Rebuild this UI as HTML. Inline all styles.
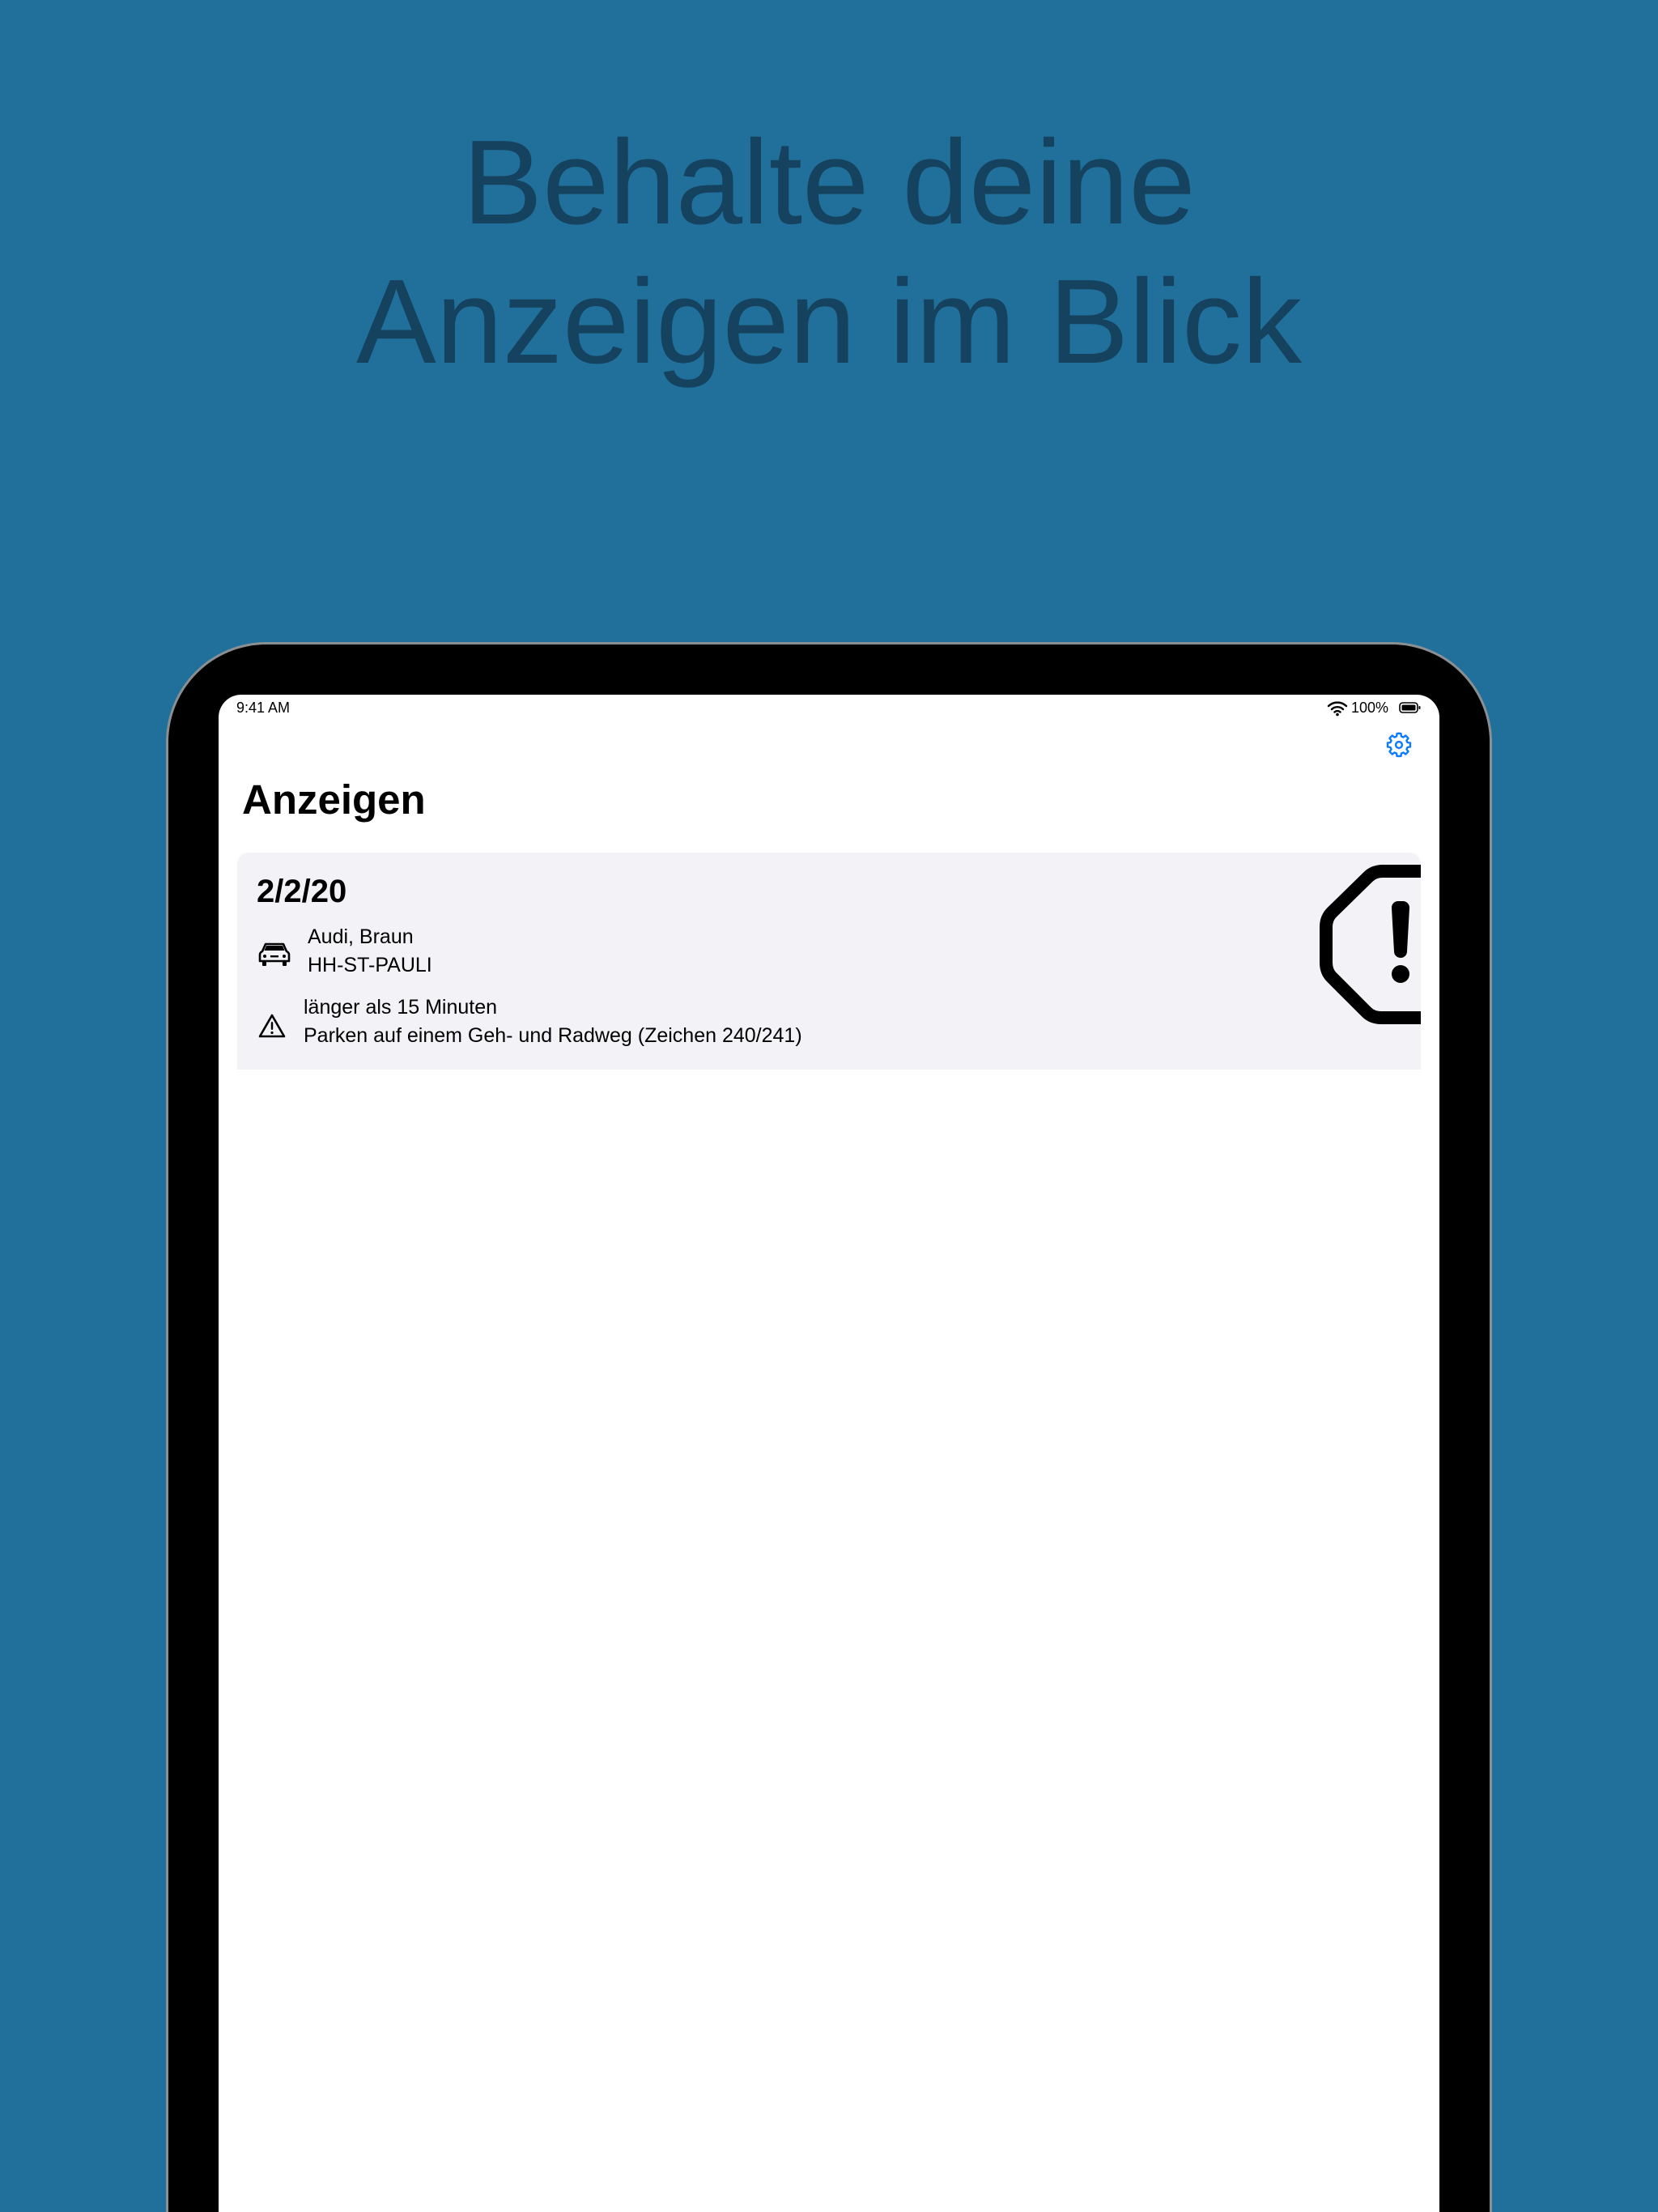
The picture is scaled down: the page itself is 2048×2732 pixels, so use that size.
<!DOCTYPE html>
<html style="overflow:hidden;width:2048px;height:2732px"><head><meta charset="utf-8"><style>
*{margin:0;padding:0;box-sizing:border-box}
body{width:2048px;height:2732px;background:#21709b;position:relative;overflow:hidden;font-family:"Liberation Sans",sans-serif}
.wrap{position:absolute;left:0;top:0;width:2048px;height:2732px;overflow:hidden}
.t{position:absolute;left:0;width:2048px;text-align:center;color:#15425e;font-size:148px;line-height:1;white-space:nowrap}
.dev{position:absolute;left:205px;top:793px;width:1638px;height:1939px;background:#000;border-radius:124px 124px 0 0;border:3px solid #8a8f94;border-bottom:none}
.scr{position:absolute;left:270px;top:858px;width:1508px;height:1874px;background:#fff;border-radius:28px 28px 0 0;overflow:hidden}
.a{position:absolute;white-space:nowrap;color:#000}
</style></head><body><div class="wrap">
<div class="t" style="top:152px">Behalte deine</div>
<div class="t" style="top:324px">Anzeigen im Blick</div>
<div class="dev"></div>
<div class="scr">
 <div class="a" style="left:22px;top:6px;font-size:18px">9:41 AM</div>
 <svg class="a" style="left:1369px;top:7px" width="26" height="20" viewBox="0 0 26 20"><path d="M2 7a16 16 0 0 1 22 0M6 11a10 10 0 0 1 14 0M9.5 14.5a5 5 0 0 1 7 0" fill="none" stroke="#000" stroke-width="2.4" stroke-linecap="round"/><circle cx="13" cy="17.5" r="1.8"/></svg>
 <div class="a" style="left:1399px;top:6px;font-size:18px">100%</div>
 <svg class="a" style="left:1458px;top:8px" width="28" height="16" viewBox="0 0 28 16"><rect x="1" y="2" width="22" height="12" rx="3.5" fill="none" stroke="#000" stroke-width="1.6"/><rect x="3.5" y="4.5" width="17" height="7" rx="1.5"/><rect x="24.5" y="6" width="2" height="4" rx="1"/></svg>
 <svg class="a" style="left:1440px;top:44px" width="36" height="36" viewBox="0 0 24 24"><path d="M12 2.5l1.6.2.4 2.3 1.6.7 1.9-1.4 2.2 2.2-1.4 1.9.7 1.6 2.3.4v3.2l-2.3.4-.7 1.6 1.4 1.9-2.2 2.2-1.9-1.4-1.6.7-.4 2.3h-3.2l-.4-2.3-1.6-.7-1.9 1.4-2.2-2.2 1.4-1.9-.7-1.6-2.3-.4v-3.2l2.3-.4.7-1.6-1.4-1.9 2.2-2.2 1.9 1.4 1.6-.7.4-2.3z" fill="none" stroke="#0a7aff" stroke-width="1.6" stroke-linejoin="round"/><circle cx="12" cy="12" r="2.6" fill="none" stroke="#0a7aff" stroke-width="1.6"/></svg>
 <div class="a" style="left:29px;top:100px;font-size:51px;font-weight:bold">Anzeigen</div>
 <div class="a" style="left:23px;top:195px;width:1462px;height:268px;background:#f2f2f7;border-radius:14px 14px 0 0;overflow:hidden">
  <div class="a" style="left:24px;top:26px;font-size:40px;font-weight:bold">2/2/20</div>
  <svg class="a" style="left:26px;top:110px" width="40" height="32" viewBox="0 0 40 32"><path d="M9 3h22l4 9c2 1 3 2 3 4v8h-36v-8c0-2 1-3 3-4z" fill="none" stroke="#000" stroke-width="2.6" stroke-linejoin="round"/><path d="M10 5h20l2.5 6h-25z"/><rect x="5" y="24" width="5" height="6" rx="1"/><rect x="30" y="24" width="5" height="6" rx="1"/><circle cx="8" cy="18" r="2"/><circle cx="32" cy="18" r="2"/><rect x="15" y="17" width="10" height="2.4"/></svg>
  <div class="a" style="left:87px;top:90px;font-size:25px">Audi, Braun</div>
  <div class="a" style="left:87px;top:125px;font-size:25px">HH-ST-PAULI</div>
  <svg class="a" style="left:25px;top:198px" width="36" height="32" viewBox="0 0 36 32"><path d="M18 3L33 29H3z" fill="none" stroke="#000" stroke-width="2.6" stroke-linejoin="round"/><rect x="16.8" y="11" width="2.4" height="10" rx="1.2"/><circle cx="18" cy="24.5" r="1.6"/></svg>
  <div class="a" style="left:82px;top:177px;font-size:25px">länger als 15 Minuten</div>
  <div class="a" style="left:82px;top:212px;font-size:25px">Parken auf einem Geh- und Radweg (Zeichen 240/241)</div>
  <svg class="a" style="left:1300px;top:0" width="162" height="268" viewBox="0 0 162 268"><path d="M175 23H115Q104 23 97 30L52 74Q45 81 45 92V136Q45 147 52 154L95 197Q102 204 113 204H175" fill="none" stroke="#000" stroke-width="16" stroke-linejoin="round"/><path d="M134 68L140 68 137 122z" stroke="#000" stroke-width="16" stroke-linejoin="round"/><circle cx="137" cy="150" r="11"/></svg>
 </div>
</div>
</div></body></html>
